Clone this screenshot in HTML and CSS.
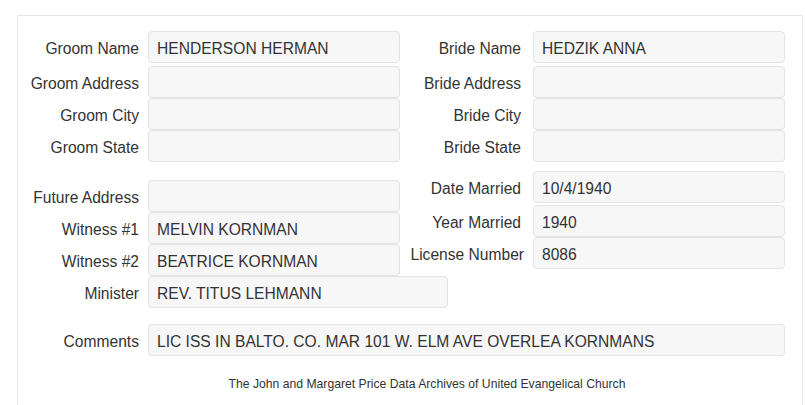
FILE: index.html
```html
<!DOCTYPE html>
<html>
<head>
<meta charset="utf-8">
<title>Marriage Record</title>
<link rel="stylesheet" href="styles.css">
</head>
<body>
<div class="panel">
  <div class="top">
    <div class="col col-left">
      <div class="row row-first"><div class="lbl">Groom Name</div><div class="field">HENDERSON HERMAN</div></div>
      <div class="row"><div class="lbl">Groom Address</div><div class="field"></div></div>
      <div class="row"><div class="lbl">Groom City</div><div class="field"></div></div>
      <div class="row"><div class="lbl">Groom State</div><div class="field"></div></div>
    </div>
    <div class="col col-right">
      <div class="row row-first"><div class="lbl">Bride Name</div><div class="field">HEDZIK ANNA</div></div>
      <div class="row"><div class="lbl">Bride Address</div><div class="field"></div></div>
      <div class="row"><div class="lbl">Bride City</div><div class="field"></div></div>
      <div class="row"><div class="lbl">Bride State</div><div class="field"></div></div>
    </div>
  </div>
  <div class="mid">
    <div class="col col-left lower-left">
      <div class="row"><div class="lbl">Future Address</div><div class="field"></div></div>
      <div class="row"><div class="lbl">Witness #1</div><div class="field">MELVIN KORNMAN</div></div>
      <div class="row"><div class="lbl">Witness #2</div><div class="field">BEATRICE KORNMAN</div></div>
      <div class="row"><div class="lbl">Minister</div><div class="field field-wide">REV. TITUS LEHMANN</div></div>
    </div>
    <div class="col col-right lower-right">
      <div class="row row-first"><div class="lbl">Date Married</div><div class="field">10/4/1940</div></div>
      <div class="row"><div class="lbl">Year Married</div><div class="field">1940</div></div>
      <div class="row"><div class="lbl lbl-long">License Number</div><div class="field">8086</div></div>
    </div>
  </div>
  <div class="row row-comments col-left"><div class="lbl">Comments</div><div class="field field-full">LIC ISS IN BALTO. CO. MAR 101 W. ELM AVE OVERLEA KORNMANS</div></div>
  <p class="footer">The John and Margaret Price Data Archives of United Evangelical Church</p>
</div>
</body>
</html>
```

FILE: styles.css
```css
html, body {
  margin: 0;
  padding: 0;
  background: #ffffff;
}

body {
  font-family: "Liberation Sans", Arial, sans-serif;
  color: #333333;
  font-size: 15.6px;
}

.panel {
  box-sizing: border-box;
  margin: 15px 2px 0 17px;
  border: 1px solid #e6e6e6;
  border-bottom: none;
  height: 390px;
  padding-top: 15px;
  overflow: hidden;
}

.top, .mid {
  display: flex;
  align-items: flex-start;
}

.col {
  display: flex;
  flex-direction: column;
  flex-shrink: 0;
}

.col-left {
  width: 390px;
}

.col-right {
  width: 390px;
}

.row {
  display: flex;
  align-items: center;
  height: 32px;
}

.row-first {
  margin-bottom: 3px;
}

.lbl {
  flex-shrink: 0;
  text-align: right;
  white-space: nowrap;
  padding-top: 3px;
  box-sizing: border-box;
}

.col-left .lbl {
  width: 121px;
  margin-right: 9px;
}

.col-right .lbl {
  width: 113px;
  margin-right: 12px;
}

.col-right .lbl-long {
  margin-right: 9px;
  width: 116px;
}

.field {
  flex-shrink: 0;
  box-sizing: border-box;
  width: 252px;
  height: 32px;
  line-height: 33px;
  padding: 0 8px;
  background: #f7f7f7;
  border: 1px solid #e3e3e3;
  border-radius: 4px;
  white-space: nowrap;
  overflow: hidden;
}

.field-wide {
  width: 300px;
}

.lower-left {
  margin-top: 18px;
}

.lower-right {
  margin-top: 9px;
}

.lower-right .row-first {
  margin-bottom: 2px;
}

.row-comments {
  margin-top: 16px;
  width: auto;
}

.field-full {
  width: 637px;
}

.footer {
  margin: 20px 0 0 0;
  font-size: 12.2px;
  line-height: 16px;
  text-align: center;
  width: 818px;
}
```
